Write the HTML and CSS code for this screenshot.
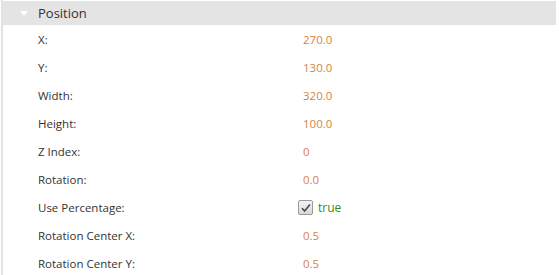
FILE: index.html
```html
<!DOCTYPE html>
<html lang="en">
<head>
    <meta charset="UTF-8">
    <title>Position</title>
    <link rel="stylesheet" href="styles.css">
</head>
<body>
    <div class="panel">
        <!-- Group header -->
        <div class="group-header">
            <span class="arrow"></span>
            <span class="group-title">Position</span>
        </div>

        <!-- Properties -->
        <div class="props">
            <div class="row"><span class="label">X:</span><span class="value">270.0</span></div>
            <div class="row"><span class="label">Y:</span><span class="value">130.0</span></div>
            <div class="row"><span class="label">Width:</span><span class="value">320.0</span></div>
            <div class="row"><span class="label">Height:</span><span class="value">100.0</span></div>
            <div class="row"><span class="label">Z Index:</span><span class="value">0</span></div>
            <div class="row"><span class="label">Rotation:</span><span class="value">0.0</span></div>
            <div class="row">
                <span class="label">Use Percentage:</span>
                <span class="value bool">
                    <span class="checkbox">
                        <svg width="12" height="12" viewBox="0 0 12 12">
                            <path d="M2 6.2 L4.6 9 L10 2.4" fill="none" stroke="#4a4a4a" stroke-width="1.6"/>
                        </svg>
                    </span>
                    <span class="bool-text">true</span>
                </span>
            </div>
            <div class="row"><span class="label">Rotation Center X:</span><span class="value">0.5</span></div>
            <div class="row"><span class="label">Rotation Center Y:</span><span class="value">0.5</span></div>
        </div>
    </div>
</body>
</html>
```

FILE: styles.css
```css
* {
    margin: 0;
    padding: 0;
    box-sizing: border-box;
}

body {
    font-family: "Open Sans", "Noto Sans", sans-serif;
    background: #ffffff;
    width: 559px;
    height: 275px;
    overflow: hidden;
}

.panel {
    border-left: 2px solid #e2e2e2;
    margin-left: 1px;
    height: 275px;
    padding-top: 1px;
}

.group-header {
    display: flex;
    align-items: center;
    height: 24px;
    margin-right: 3px;
    background: #e4e4e4;
}

.arrow {
    width: 0;
    height: 0;
    margin-left: 17px;
    border-left: 4px solid transparent;
    border-right: 4px solid transparent;
    border-top: 5px solid #ffffff;
}

.group-title {
    margin-left: 10px;
    font-size: 13px;
    color: #333333;
}

.props {
    display: flex;
    flex-direction: column;
}

.row {
    display: flex;
    align-items: center;
    height: 28.1px;
    font-size: 11.5px;
}

.label {
    width: 300px;
    padding-left: 35px;
    color: #333333;
}

.value {
    color: #d7823f;
}

.bool {
    display: flex;
    align-items: center;
    margin-left: -5px;
}

.checkbox {
    display: flex;
    align-items: center;
    justify-content: center;
    width: 15px;
    height: 15px;
    border: 1px solid #9a9a9a;
    border-radius: 2px;
    background: linear-gradient(#f4f4f4, #d8d8d8);
}

.bool-text {
    margin-left: 5px;
    color: #3a8a12;
    font-size: 12px;
}
```
